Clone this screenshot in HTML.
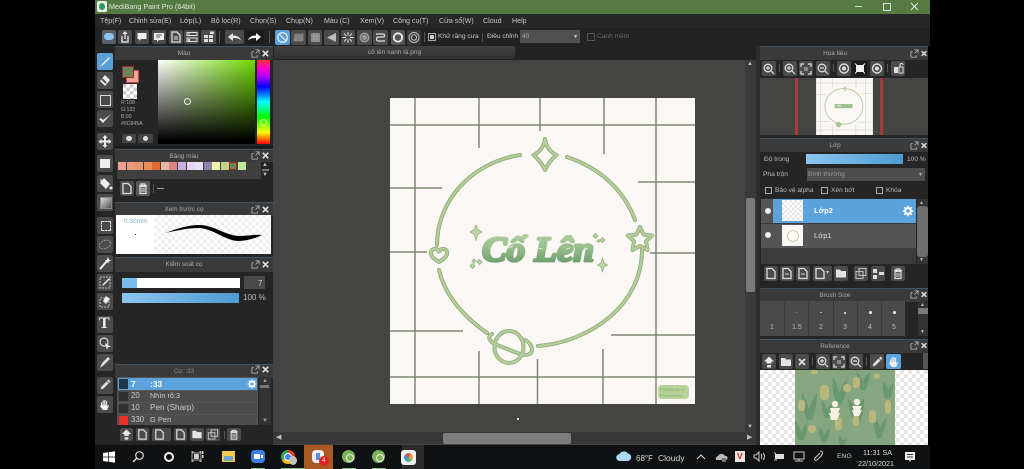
<!DOCTYPE html>
<html><head><meta charset="utf-8"><style>
html,body{margin:0;padding:0;width:1024px;height:469px;overflow:hidden;background:#000;font-family:"Liberation Sans","DejaVu Sans",sans-serif}
#r{position:relative;width:1024px;height:469px;overflow:hidden;background:#000;filter:blur(.35px)}
#r div,#r span,#r svg{position:absolute}
.m{top:16px;font-size:7.1px;color:#c8c8c8;white-space:nowrap;line-height:10px}
.h{background:#3a3a3a;border-top:1px solid #44535e;color:#aaa;font-size:6.400px;text-align:center;line-height:13px}
.hl{width:138px;padding-right:20px}
.hr{width:150px;padding-right:18px}
.t{font-size:6.600px;color:#bbb;white-space:nowrap;line-height:10px}
.b{background:#4b4b4b;border-radius:2px}
.w{background:#fff}
.s{width:7.500px;height:8px;top:162px}
</style></head><body><div id="r">
<svg width="0" height="0" style="left:0;top:0"><defs>
<symbol id="page" viewBox="0 0 14 14"><path d="M3 2h5l3 3v7H3z" fill="none" stroke="#ddd" stroke-width="1.3"/></symbol>
<symbol id="trash" viewBox="0 0 14 14"><path d="M3 4h8M5 4V2.500h4V4M4 5h6v7H4z" fill="none" stroke="#ddd" stroke-width="1.200"/><path d="M6 6.500v4M8 6.500v4" stroke="#ddd"/></symbol>
<symbol id="folder" viewBox="0 0 14 14"><path d="M2 3h4l1 1.500h5V11H2z" fill="#e4e4e4"/></symbol>
<symbol id="zin" viewBox="0 0 14 14"><circle cx="6" cy="6" r="3.800" fill="none" stroke="#ddd" stroke-width="1.300"/><path d="M9 9l3 3M4 6h4M6 4v4" stroke="#ddd" stroke-width="1.200"/></symbol>
<symbol id="zout" viewBox="0 0 14 14"><circle cx="6" cy="6" r="3.800" fill="none" stroke="#ddd" stroke-width="1.300"/><path d="M9 9l3 3M4 6h4" stroke="#ddd" stroke-width="1.200"/></symbol>
<symbol id="fit" viewBox="0 0 14 14"><path d="M2 5V2h3M9 2h3v3M12 9v3H9M5 12H2V9" fill="none" stroke="#ddd" stroke-width="1.200"/><rect x="5" y="5" width="4" height="4" fill="#888"/></symbol>
<symbol id="up" viewBox="0 0 14 14"><path d="M7 1.500l5 5H9.500v2h-5v-2H2zM5 10h4v2.500H5z" fill="#e8e8e8"/></symbol>
<symbol id="copy" viewBox="0 0 14 14"><path d="M5 2h7v7H5zM2 5h7v7H2z" fill="none" stroke="#bbb" stroke-width="1.100"/></symbol>
<symbol id="dropper" viewBox="0 0 14 14"><path d="M2.500 11.500l1-3 5-5 2 2-5 5zM9 3l1.500-1.500 2 2L11 5z" fill="#ddd"/></symbol>
<symbol id="hand" viewBox="0 0 14 14"><path d="M3 7V4.500h1V7h.5V2.500h1.200V7h.5V2h1.200v5h.5V3h1.200v5.500l1-1.500 1 .5-2 4.500H5L2 8.500z" fill="#eee"/></symbol>
<symbol id="gear" viewBox="0 0 14 14"><circle cx="7" cy="7" r="3.400" fill="none" stroke="#fff" stroke-width="2.400"/><path d="M7 .8v2.500M7 10.700v2.500M.8 7h2.500M10.700 7h2.500M2.600 2.600l1.800 1.800M9.600 9.600l1.800 1.800M2.600 11.400l1.800-1.800M9.600 4.400l1.800-1.800" stroke="#fff" stroke-width="1.800"/></symbol>
<symbol id="pop" viewBox="0 0 10 10"><path d="M1 3h2M1 3v6h6V7M5 1h4v4M9 1L5 5" fill="none" stroke="#bbb" stroke-width=".9"/></symbol>
<symbol id="x" viewBox="0 0 10 10"><path d="M2 2l6 6M8 2L2 8" stroke="#ddd" stroke-width="1.900"/></symbol>
<linearGradient id="tg" gradientUnits="userSpaceOnUse" x1="0" y1="232" x2="0" y2="264"><stop offset="0" stop-color="#b4d2a2"/><stop offset=".5" stop-color="#97bd8c"/><stop offset="1" stop-color="#6a9c6e"/></linearGradient>
</defs></svg>

<!-- app chrome -->
<div style="left:95px;top:0;width:835px;height:14px;background:#557a42"></div>
<div style="left:97px;top:1px;width:10px;height:11px;border-radius:2px;background:#e8f2e8"></div>
<div style="left:99px;top:3px;width:6px;height:7px;border-radius:50%;background:#2b9a66"></div>
<span style="left:109px;top:2px;font-size:7.200px;line-height:10px;color:#dfe6d8;white-space:nowrap">MediBang Paint Pro (64bit)</span>
<div style="left:855px;top:6px;width:7px;height:1px;background:#ddd"></div>
<div style="left:883px;top:3px;width:6px;height:6px;border:1px solid #ddd"></div>
<svg style="left:910px;top:2px" width="9" height="9"><path d="M1 1l7 7M8 1L1 8" stroke="#e8e8e8"/></svg>

<div style="left:95px;top:14px;width:835px;height:14px;background:#272727"></div>
<span class="m" style="left:100px">Tệp(F)</span><span class="m" style="left:129px">Chỉnh sửa(E)</span><span class="m" style="left:180px">Lớp(L)</span><span class="m" style="left:211px">Bộ lọc(R)</span><span class="m" style="left:250px">Chọn(S)</span><span class="m" style="left:286px">Chụp(N)</span><span class="m" style="left:324px">Màu (C)</span><span class="m" style="left:360px">Xem(V)</span><span class="m" style="left:393px">Công cụ(T)</span><span class="m" style="left:439px">Cửa sổ(W)</span><span class="m" style="left:483px">Cloud</span><span class="m" style="left:512px">Help</span>

<div style="left:95px;top:28px;width:835px;height:18px;background:#222"></div>
<div class="b" style="left:102px;top:30px;width:14px;height:14px;background:#55606a"></div><div style="left:104px;top:33px;width:10px;height:7px;border-radius:4px;background:#8fc4ee"></div>
<div class="b" style="left:118px;top:30px;width:14px;height:14px"></div><svg style="left:118px;top:30px" width="14" height="14"><path d="M4 6v6h6V6M7 9V2M5 4l2-2 2 2" fill="none" stroke="#eee" stroke-width="1.200"/></svg>
<div class="b" style="left:135px;top:30px;width:14px;height:14px"></div><svg style="left:135px;top:30px" width="14" height="14"><path d="M2.500 3h9v6H6l-2 2V9H2.500z" fill="#eee"/></svg>
<div class="b" style="left:152px;top:30px;width:14px;height:14px"></div><svg style="left:152px;top:30px" width="14" height="14"><path d="M2 3h10v7H7l-2 2v-2H2z" fill="#eee"/><path d="M4 5h6M4 7h4" stroke="#555"/></svg>
<div class="b" style="left:169px;top:30px;width:14px;height:14px"></div><svg style="left:169px;top:30px" width="14" height="14"><use href="#page"/><path d="M5 7h4M5 9h4" stroke="#ddd"/></svg>
<div class="b" style="left:184px;top:30px;width:15px;height:14px"></div><svg style="left:185px;top:30px" width="14" height="14"><path d="M2 2.500h10v3H2zM2 8h10v3.500H2z" fill="none" stroke="#ddd"/><rect x="3" y="3.500" width="2" height="1" fill="#ddd"/><rect x="3" y="9" width="2" height="2" fill="#ddd"/></svg>
<div class="b" style="left:201px;top:30px;width:15px;height:14px"></div><svg style="left:202px;top:30px" width="14" height="14"><path d="M2 5h4v3H2zM7 5h4v3H7zM2 9h4v3H2zM7 9h4v3H7zM8 1.500h4v2.500H8z" fill="#ddd"/></svg>
<div style="left:219px;top:31px;width:1px;height:12px;background:#555"></div>
<div class="b" style="left:225px;top:30px;width:19px;height:14px"></div><svg style="left:225px;top:30px" width="19" height="14"><path d="M3 7l5-4v2.500c4 0 7 1.500 8 5-2-2-4-2.500-8-2.500V11z" fill="#e4e4e4"/></svg>
<div class="b" style="left:246px;top:30px;width:18px;height:14px;background:#1c1c1c"></div><svg style="left:246px;top:30px" width="18" height="14"><path d="M15 7l-5-4v2.500c-4 0-7 1.500-8 5 2-2 4-2.500 8-2.500V11z" fill="#fff"/></svg>
<div style="left:269px;top:31px;width:1px;height:12px;background:#555"></div>
<div style="left:275px;top:30px;width:15px;height:15px;background:#5a9fd8;border-radius:2px"></div><svg style="left:275px;top:30px" width="15" height="15"><circle cx="7.500" cy="7.500" r="4.800" fill="none" stroke="#e9f3fb" stroke-width="1.200"/><path d="M4 4l7 7" stroke="#e9f3fb" stroke-width="1.200"/></svg>
<div class="b" style="left:291px;top:30px;width:15px;height:15px"></div><svg style="left:291px;top:30px" width="15" height="15"><path d="M3 11l1-7h8v7zM3 8h9M4 6h8M3.500 10h8.500" fill="#777" stroke="#999" stroke-width=".6"/></svg>
<div class="b" style="left:308px;top:30px;width:14px;height:15px"></div><svg style="left:308px;top:30px" width="14" height="15"><rect x="3" y="3" width="9" height="9" fill="#888"/><path d="M6 3v9M9 3v9M3 6h9M3 9h9" stroke="#aaa" stroke-width=".6"/></svg>
<div class="b" style="left:324px;top:30px;width:15px;height:15px"></div><svg style="left:324px;top:30px" width="15" height="15"><path d="M12 3v9L3 7.500z" fill="#bbb"/></svg>
<div class="b" style="left:341px;top:30px;width:14px;height:15px"></div><svg style="left:341px;top:30px" width="14" height="15"><path d="M7 2v3.500M7 9.500V13M1.500 7.500H5M9 7.500h3.500M3 3.500l2.500 2.500M8.500 9l2.500 2.500M11 3.500L8.500 6M5.500 9L3 11.500" stroke="#ddd" stroke-width="1"/></svg>
<div class="b" style="left:357px;top:30px;width:15px;height:15px"></div><svg style="left:357px;top:30px" width="15" height="15"><circle cx="7.500" cy="7.500" r="5" fill="#999"/><circle cx="7.500" cy="7.500" r="3" fill="none" stroke="#666"/></svg>
<div class="b" style="left:373px;top:30px;width:15px;height:15px"></div><svg style="left:373px;top:30px" width="15" height="15"><path d="M3 4h7c2 0 2 3 0 3H5c-2 0-2 4 0 4h7" fill="none" stroke="#ddd" stroke-width="1.200"/></svg>
<div class="b" style="left:391px;top:30px;width:14px;height:15px;background:#555"></div><svg style="left:391px;top:30px" width="14" height="15"><circle cx="7" cy="7.500" r="4.200" fill="none" stroke="#eee" stroke-width="1.800"/></svg>
<div class="b" style="left:407px;top:30px;width:14px;height:15px;background:#3a3a3a"></div><svg style="left:407px;top:30px" width="14" height="15"><circle cx="7" cy="7.500" r="5" fill="none" stroke="#bbb"/><circle cx="7" cy="7.500" r="2.700" fill="none" stroke="#bbb"/></svg>
<div style="left:424px;top:32px;width:1px;height:10px;background:#555"></div>
<div style="left:428px;top:33px;width:6px;height:6px;border:1px solid #aaa"></div><div style="left:430px;top:35px;width:4px;height:4px;background:#ccc"></div>
<span class="t" style="left:438px;top:32px;color:#c8c8c8">Khử răng cưa</span>
<div style="left:482px;top:33px;width:1px;height:9px;background:#555"></div>
<span class="t" style="left:487px;top:32px;color:#c8c8c8">Điều chỉnh</span>
<div style="left:520px;top:30px;width:60px;height:13px;background:#505050"></div><span class="t" style="left:522px;top:32px;color:#aaa">40</span><span class="t" style="left:574px;top:32px;font-size:6px;color:#ccc">▾</span>
<div style="left:587px;top:33px;width:6px;height:6px;border:1px solid #555"></div>
<span class="t" style="left:597px;top:32px;color:#6c6c6c">Canh mềm</span>

<!-- left tool column -->
<div style="left:95px;top:46px;width:20px;height:399px;background:#262626"></div>
<div style="left:97px;top:53px;width:16px;height:17px;background:#5a9fd8;border-radius:2px"></div><svg style="left:97px;top:53px" width="16" height="17"><path d="M3 14l2-3 7-7 1 1-7 7z" fill="#eaf3fb"/></svg>
<div class="b" style="left:97px;top:72px;width:16px;height:17px"></div><svg style="left:97px;top:72px" width="16" height="17"><path d="M8 3l5 5-5 6-5-5z" fill="#eee"/><path d="M5 7l4 4" stroke="#555" stroke-width="2"/></svg>
<div class="b" style="left:97px;top:91px;width:16px;height:17px"></div><div style="left:100px;top:95px;width:9px;height:9px;border:1px solid #ddd"></div>
<div class="b" style="left:97px;top:110px;width:16px;height:17px"></div><svg style="left:97px;top:110px" width="16" height="17"><path d="M2 9l4 4 8-9-8 6-2-2z" fill="#e4e4e4"/></svg>
<div class="b" style="left:97px;top:133px;width:16px;height:17px"></div><svg style="left:97px;top:133px" width="16" height="17"><path d="M8 2l2.500 3H9v2.500h2.500V6l3 2.500-3 2.500V9.500H9V12h1.500L8 15l-2.500-3H7V9.500H4.500V11l-3-2.500 3-2.500v1.500H7V5H5.500z" fill="#eee"/></svg>
<div class="b" style="left:97px;top:155px;width:16px;height:17px"></div><div style="left:100px;top:159px;width:10px;height:9px;background:#eee"></div>
<div class="b" style="left:97px;top:175px;width:16px;height:17px"></div><svg style="left:97px;top:175px" width="16" height="17"><path d="M7 3l6 6-4 5-6-6z" fill="#eee"/><path d="M4 8V4" stroke="#eee"/><circle cx="14" cy="13" r="1.500" fill="#eee"/></svg>
<div class="b" style="left:97px;top:194px;width:16px;height:17px"></div><div style="left:100px;top:197px;width:10px;height:10px;border:1px solid #888;background:linear-gradient(135deg,#ddd,#555)"></div>
<div class="b" style="left:97px;top:217px;width:16px;height:17px"></div><div style="left:101px;top:221px;width:8px;height:8px;border:1px dashed #ddd"></div>
<div class="b" style="left:97px;top:236px;width:16px;height:17px"></div><svg style="left:97px;top:236px" width="16" height="17"><ellipse cx="8" cy="8.500" rx="6" ry="4" transform="rotate(-25 8 8.500)" fill="none" stroke="#999" stroke-dasharray="2 1"/></svg>
<div class="b" style="left:97px;top:255px;width:16px;height:17px"></div><svg style="left:97px;top:255px" width="16" height="17"><path d="M3 14L10 6" stroke="#eee" stroke-width="2"/><path d="M11 2l1 2.500 2 1-2 1-1 2-1-2-2-1 2-1z" fill="#eee"/></svg>
<div class="b" style="left:97px;top:274px;width:16px;height:17px"></div><svg style="left:97px;top:274px" width="16" height="17"><rect x="3" y="3" width="10" height="11" fill="none" stroke="#bbb" stroke-dasharray="2 1"/><path d="M5 12l1-2 6-6 1 1-6 6z" fill="#eee"/></svg>
<div class="b" style="left:97px;top:293px;width:16px;height:17px"></div><svg style="left:97px;top:293px" width="16" height="17"><rect x="3" y="5" width="9" height="9" fill="none" stroke="#bbb" stroke-dasharray="2 1"/><path d="M9 3l4 3-4 5-3-3z" fill="#eee"/></svg>
<div class="b" style="left:97px;top:316px;width:16px;height:17px"></div><span style="left:99px;top:315px;font:bold 16px/18px 'Liberation Serif',serif;color:#eee">T</span>
<div class="b" style="left:97px;top:335px;width:16px;height:17px"></div><svg style="left:97px;top:335px" width="16" height="17"><circle cx="7" cy="7" r="4" fill="none" stroke="#ddd" stroke-width="1.200"/><path d="M8 8l6 4-3 0-1 3z" fill="#eee"/></svg>
<div class="b" style="left:97px;top:354px;width:16px;height:17px"></div><svg style="left:97px;top:354px" width="16" height="17"><path d="M3 14l2-5 6-6 2 2-6 6z" fill="#ddd"/></svg>
<div class="b" style="left:97px;top:377px;width:16px;height:17px"></div><svg style="left:98px;top:378px" width="14" height="14"><use href="#dropper"/></svg>
<div class="b" style="left:97px;top:396px;width:16px;height:17px"></div><svg style="left:98px;top:398px" width="14" height="14"><use href="#hand"/></svg>

<!-- left panels -->
<div style="left:115px;top:46px;width:158px;height:399px;background:#252525"></div>
<div class="h hl" style="left:115px;top:46px;height:13px">Màu</div>
<svg style="left:251px;top:49px" width="9" height="9"><use href="#pop"/></svg><svg style="left:261px;top:49px" width="9" height="9"><use href="#x"/></svg>
<div style="left:126px;top:70px;width:11px;height:11px;background:#f0a49a;border:1px solid #c44"></div>
<div style="left:122px;top:66px;width:10px;height:10px;background:#6c845a;border:1px solid #a02828"></div>
<div style="left:123px;top:84px;width:14px;height:15px;background:conic-gradient(#fff 25%,#ccc 0 50%,#fff 0 75%,#ccc 0);background-size:7px 7px"></div>
<span class="t" style="left:121px;top:100px;font-size:5.200px;line-height:7px;color:#aaa;white-space:pre">R:108
G:132
B:90
#6C845A</span>
<div class="b" style="left:122px;top:134px;width:14px;height:9px;background:#444"></div><div style="left:126px;top:136px;width:6px;height:5px;border-radius:3px;background:#ddd"></div>
<div class="b" style="left:138px;top:134px;width:15px;height:9px;background:#444"></div><div style="left:143px;top:136px;width:5px;height:5px;border-radius:3px;background:#ddd"></div>
<div style="left:158px;top:60px;width:97px;height:84px;background:linear-gradient(to bottom,rgba(0,0,0,0),#000 96%),linear-gradient(to right,#fff,#6dd800)"></div>
<div style="left:257px;top:60px;width:13px;height:84px;background:linear-gradient(to bottom,#f33,#f0c 10%,#a0f 20%,#00f 32%,#0ff 50%,#0f0 68%,#ff0 86%,#f00)"></div>
<div style="left:184px;top:98px;width:5px;height:5px;border:1.500px solid #eee;border-radius:50%"></div>
<div style="left:260px;top:119px;width:5px;height:5px;border:1.500px solid #d8f0a0;border-radius:50%"></div>
<div style="left:115px;top:146px;width:158px;height:2px;background:#1a1a1a"></div>

<div class="h hl" style="left:115px;top:149px;height:12px">Bảng màu</div>
<svg style="left:251px;top:151px" width="9" height="9"><use href="#pop"/></svg><svg style="left:261px;top:151px" width="9" height="9"><use href="#x"/></svg>
<div style="left:117px;top:161px;width:144px;height:18px;background:#3f3f3f"></div>
<div class="s" style="left:118px;background:#e9a08e"></div><div class="s" style="left:127px;background:#ea9a7c"></div><div class="s" style="left:135px;background:#e9956c"></div><div class="s" style="left:144px;background:#e98b58"></div><div class="s" style="left:152px;background:#dd6a30"></div><div class="s" style="left:161px;background:#e9b7a2"></div><div class="s" style="left:169px;background:#d98585"></div><div class="s" style="left:178px;background:#cdb0e0"></div><div class="s" style="left:187px;background:#e6d4f2"></div><div class="s" style="left:195px;background:#e8e0f5"></div><div class="s" style="left:204px;background:#8a82a8"></div><div class="s" style="left:212px;background:#f4f2a8"></div><div class="s" style="left:221px;background:#bcd68c"></div><div class="s" style="left:229px;background:#6c845a;box-sizing:border-box;border:1px solid #a02828"></div><div class="s" style="left:238px;background:#bfe798"></div>
<span style="left:262px;top:162px;font-size:6px;color:#bbb;line-height:7px">▲</span><div style="left:262px;top:169px;width:7px;height:2px;background:#777"></div><span style="left:262px;top:172px;font-size:6px;color:#bbb;line-height:7px">▼</span>
<div class="b" style="left:120px;top:181px;width:14px;height:15px"></div><svg style="left:120px;top:181px" width="14" height="15"><use href="#page"/></svg>
<div class="b" style="left:136px;top:181px;width:14px;height:15px;background:#5a5a5a"></div><svg style="left:136px;top:181px" width="14" height="15"><use href="#trash"/></svg>
<div style="left:153px;top:184px;width:1px;height:9px;background:#555"></div>
<div style="left:157px;top:188px;width:7px;height:1px;background:#aaa"></div>

<div class="h hl" style="left:115px;top:202px;height:13px">Xem trước cọ</div>
<svg style="left:251px;top:205px" width="9" height="9"><use href="#pop"/></svg><svg style="left:261px;top:205px" width="9" height="9"><use href="#x"/></svg>
<div style="left:116px;top:215px;width:38px;height:39px;background:#fff"></div>
<span style="left:124px;top:217px;font-size:6.500px;line-height:9px;color:#7fa9c9">0.30mm</span>
<div style="left:135px;top:234px;width:1px;height:1px;background:#333"></div>
<div style="left:154px;top:215px;width:117px;height:39px;background:#fff repeating-conic-gradient(#eee 0 25%,#fff 0 50%) 0 0/7px 7px"></div>
<svg style="left:154px;top:215px" width="117" height="39"><path d="M11 18C25 13 35 10 45 10C60 10 70 20 85 21C95 21 103 19 108 20C100 24 92 26 84 26C70 25 60 14 45 13C35 13 25 15 11 18Z" fill="#000"/></svg>

<div class="h hl" style="left:115px;top:257px;height:14px">Kiểm soát cọ</div>
<svg style="left:251px;top:260px" width="9" height="9"><use href="#pop"/></svg><svg style="left:261px;top:260px" width="9" height="9"><use href="#x"/></svg>
<div style="left:122px;top:278px;width:118px;height:10px;background:#fff"></div><div style="left:122px;top:278px;width:15px;height:10px;background:#79bdeb"></div>
<div style="left:244px;top:276px;width:21px;height:13px;background:#4a4a4a"></div><span class="t" style="left:258px;top:279px;color:#ccc;font-size:8px">7</span>
<div style="left:122px;top:293px;width:117px;height:10px;background:linear-gradient(to right,#8cc6f0,#4d9bd2)"></div>
<span class="t" style="left:243px;top:293px;font-size:8px;color:#bbb">100 %</span>

<div class="h hl" style="left:115px;top:364px;height:13px;color:#8c8c8c">Cọ: :33</div>
<svg style="left:251px;top:365px" width="9" height="9"><use href="#pop"/></svg><svg style="left:261px;top:365px" width="9" height="9"><use href="#x"/></svg>
<div style="left:117px;top:377px;width:141px;height:48px;background:#555"></div>
<div style="left:118px;top:378px;width:139px;height:12px;background:#5ba3dc"></div>
<div style="left:119px;top:379px;width:9px;height:10px;background:#1f3447"></div>
<span class="t" style="left:131px;top:379px;font-size:8.500px;color:#fff;font-weight:bold">7</span><span class="t" style="left:150px;top:379px;font-size:8.500px;color:#fff;font-weight:bold">:33</span>
<svg style="left:247px;top:379px" width="10" height="10"><use href="#gear"/></svg>
<div style="left:118px;top:391px;width:139px;height:11px;background:#4c4c4c"></div><div style="left:119px;top:392px;width:9px;height:9px;background:#2f2f2f"></div>
<span class="t" style="left:131px;top:391px;font-size:7.800px;color:#ccc">20</span><span class="t" style="left:150px;top:391px;font-size:7.300px;color:#ccc">Nhìn rõ:3</span>
<div style="left:118px;top:403px;width:139px;height:11px;background:#4c4c4c"></div><div style="left:119px;top:404px;width:9px;height:9px;background:#2f2f2f"></div>
<span class="t" style="left:131px;top:403px;font-size:7.800px;color:#ccc">10</span><span class="t" style="left:150px;top:403px;font-size:8.200px;color:#ccc">Pen (Sharp)</span>
<div style="left:118px;top:415px;width:139px;height:10px;background:#4c4c4c"></div><div style="left:119px;top:416px;width:9px;height:9px;background:#e83030"></div>
<span class="t" style="left:131px;top:415px;font-size:7.800px;color:#ccc">330</span><span class="t" style="left:150px;top:415px;font-size:7.500px;color:#ccc">G Pen</span>
<div style="left:259px;top:377px;width:12px;height:48px;background:#333"></div><span style="left:262px;top:378px;font-size:6px;color:#999;line-height:7px">▲</span><div style="left:260px;top:385px;width:9px;height:3px;background:#777"></div><span style="left:262px;top:418px;font-size:6px;color:#999;line-height:7px">▼</span>
<div class="b" style="left:120px;top:428px;width:13px;height:13px"></div><svg style="left:120px;top:428px" width="13" height="13"><use href="#up"/></svg>
<div class="b" style="left:136px;top:428px;width:13px;height:13px"></div><svg style="left:136px;top:428px" width="13" height="13"><use href="#page"/></svg>
<div class="b" style="left:152px;top:428px;width:19px;height:13px"></div><svg style="left:153px;top:428px" width="13" height="13"><use href="#page"/></svg>
<div class="b" style="left:174px;top:428px;width:13px;height:13px"></div><svg style="left:174px;top:428px" width="13" height="13"><use href="#page"/></svg>
<div class="b" style="left:190px;top:428px;width:14px;height:13px"></div><svg style="left:190px;top:428px" width="14" height="13"><use href="#folder"/></svg>
<div class="b" style="left:206px;top:428px;width:14px;height:13px"></div><svg style="left:206px;top:428px" width="14" height="13"><use href="#copy"/></svg>
<div style="left:224px;top:431px;width:1px;height:8px;background:#555"></div>
<div class="b" style="left:227px;top:428px;width:14px;height:13px"></div><svg style="left:227px;top:428px" width="14" height="13"><use href="#trash"/></svg>

<!-- canvas area -->
<div style="left:273px;top:46px;width:487px;height:399px;background:#444442"></div>
<div style="left:273px;top:46px;width:487px;height:14px;background:#222"></div>
<div style="left:274px;top:46px;width:241px;height:13px;background:linear-gradient(#414141,#303030);color:#aaa;font-size:6.600px;line-height:13px;text-align:center;white-space:nowrap">cố lên xanh lá.png</div>
<div style="left:745px;top:60px;width:11px;height:372px;background:#3a3a3a"></div>
<span style="left:747px;top:61px;font-size:6px;line-height:7px;color:#bbb">▲</span>
<span style="left:747px;top:424px;font-size:6px;line-height:7px;color:#bbb">▼</span>
<div style="left:746px;top:198px;width:9px;height:94px;background:#7a7a7a;border-radius:2px"></div>
<div style="left:273px;top:432px;width:483px;height:12px;background:#383838"></div>
<span style="left:276px;top:433px;font-size:7px;line-height:9px;color:#bbb">◀</span>
<span style="left:747px;top:433px;font-size:7px;line-height:9px;color:#bbb">▶</span>
<div style="left:443px;top:433px;width:128px;height:11px;background:#7e7e7e;border-radius:2px"></div>
<div style="left:517px;top:418px;width:2px;height:2px;background:#ddd"></div>

<!-- artwork -->
<svg style="left:390px;top:98px" width="305" height="306" viewBox="390 98 305 306">
<defs>
<g id="art" fill="none" stroke-linecap="round" stroke-linejoin="round">
<path d="M520 155C470 163 437 202 437 245"/>
<path d="M567 157C600 168 624 190 635 220"/>
<path d="M439 270C445 295 463 316 487 333"/>
<path d="M538 346C590 342 642 305 642 250"/>
<path d="M545 139q1.500 11 11.500 16-8 7-11.500 15-3.500-8-11.500-15 10-5 11.500-16z"/>
<path d="M640 227l3.500 7.500 8.500 1-6 6 1.500 8.500-7.500-4-7.500 4 1.500-8.500-6-6 8.500-1z"/>
<path d="M439 262c-7-4-9-8-8-10.500 1.500-3.500 6-3.500 8 0 2-3.500 6.500-3.500 8 0 1 2.500-1 6.500-8 10.500z"/>
<ellipse cx="509" cy="347" rx="14.500" ry="16"/>
<path d="M492 334C487 336 489 342 497 345L520 354C530 357 534 352 531 346C530 343 527 341 525 340"/>
</g>
</defs>
<rect x="390" y="98" width="305" height="306" fill="#fbf7f4"/>
<g stroke="#7d8574" stroke-width="1.500" fill="none">
<path d="M415 98v306M656 98v306M479 98v50M540 98v33M604 98v56M390 125h305M390 377h305M390 188h52M638 182h57M390 252h37M650 253h45M390 331h73M611 335h84M479 351v53M537.500 359v45M603 349v55"/>
</g>
<use href="#art" stroke="#8caa78" stroke-width="4"/>
<use href="#art" stroke="#b3cd9a" stroke-width="2.400"/>
<g stroke="#9cbb88" stroke-width="1" stroke-linejoin="round" fill="#bcd4a6">
<path d="M476 225l1.800 4.500 4.200 2.500-4.200 2.500-1.800 6-1.800-6-4.200-2.500 4.200-2.500z"/>
<path d="M602.500 258l1.500 5 3.500 2-3.500 2-1.500 5-1.500-5-3.500-2 3.500-2z"/>
<path d="M470 266l2.500-2.500 2.500 2.500-2.500 2.500zM477 262l2.500-2.500 2.500 2.500-2.500 2.500zM472 261l2-2 2 2-2 2z"/>
<path d="M593 236l2.500-2.500 2.500 2.500-2.500 2.500zM600 240l2.500-2.500 2.500 2.500-2.500 2.500zM597 241l1.500-1.500 1.500 1.500-1.500 1.500z"/>
</g>
<text x="482" y="261" font-family="Liberation Serif" font-weight="bold" font-style="italic" font-size="35" textLength="112" lengthAdjust="spacingAndGlyphs" fill="url(#tg)" stroke="url(#tg)" stroke-width="2.800" stroke-linejoin="round">Cố Lên</text>
<g stroke="#e8f2df" stroke-width="1" fill="none" opacity=".8"><path d="M490 248l5 1M508 248l5-2M537 248l6 1M551 248l4 1M566 249l4-1M584 248l4 1"/></g>
<rect x="658" y="385" width="31" height="14" rx="4" fill="#b7d397"/>
<text x="660" y="391" font-family="Liberation Sans" font-size="4.300" fill="#8fb07a">MediBang.vn</text>
<text x="660" y="397" font-family="Liberation Sans" font-size="4.300" fill="#8fb07a">Background</text>
</svg>

<!-- right panels -->
<div style="left:756px;top:46px;width:4px;height:399px;background:#2d2d2d"></div>
<div style="left:760px;top:46px;width:168px;height:399px;background:#252525"></div>
<div class="h hr" style="left:760px;top:46px;height:13px">Họa tiêu</div>
<svg style="left:910px;top:49px" width="9" height="9"><use href="#pop"/></svg><svg style="left:920px;top:49px" width="8" height="9"><use href="#x"/></svg>
<div class="b" style="left:762px;top:61px;width:14px;height:15px"></div><svg style="left:762px;top:62px" width="14" height="14"><use href="#zin"/></svg>
<div style="left:779px;top:64px;width:1px;height:8px;background:#555"></div>
<div class="b" style="left:783px;top:61px;width:14px;height:15px"></div><svg style="left:783px;top:62px" width="14" height="14"><use href="#zin"/></svg>
<div class="b" style="left:799px;top:61px;width:14px;height:15px"></div><svg style="left:799px;top:62px" width="14" height="14"><use href="#fit"/></svg>
<div class="b" style="left:816px;top:61px;width:14px;height:15px"></div><svg style="left:816px;top:62px" width="14" height="14"><use href="#zout"/></svg>
<div style="left:833px;top:64px;width:1px;height:8px;background:#555"></div>
<div class="b" style="left:837px;top:61px;width:14px;height:15px"></div><svg style="left:837px;top:61px" width="14" height="15"><circle cx="7" cy="7.500" r="4.500" fill="none" stroke="#ddd" stroke-width="1.400"/><circle cx="7" cy="7.500" r="2" fill="#ddd"/></svg>
<div class="b" style="left:853px;top:61px;width:14px;height:15px;background:#1c1c1c"></div><svg style="left:853px;top:61px" width="14" height="15"><path d="M3 4h8v7H3z" fill="#eee"/><path d="M2 2.500l2 2M12 2.500l-2 2M2 12.500l2-2M12 12.500l-2-2" stroke="#eee"/></svg>
<div class="b" style="left:870px;top:61px;width:14px;height:15px"></div><svg style="left:870px;top:61px" width="14" height="15"><circle cx="7" cy="7.500" r="4.500" fill="none" stroke="#ddd" stroke-width="1.400"/><circle cx="7" cy="7.500" r="2" fill="#ddd"/></svg>
<div style="left:887px;top:64px;width:1px;height:8px;background:#555"></div>
<div class="b" style="left:891px;top:61px;width:14px;height:15px"></div><svg style="left:891px;top:61px" width="14" height="15"><path d="M3 6h4v6H3z" fill="#ddd"/><path d="M8 6h4v6H8zM9 6V4c0-2 3-2 3 0" fill="none" stroke="#ddd"/></svg>
<div style="left:760px;top:78px;width:168px;height:57px;background:#444442"></div>
<div style="left:795px;top:78px;width:3px;height:57px;background:#a83a3a"></div>
<div style="left:880px;top:78px;width:3px;height:57px;background:#a83a3a"></div>
<svg style="left:816px;top:78px" width="57" height="57" viewBox="390 98 305 306"><rect x="390" y="98" width="305" height="306" fill="#fbf7f4"/><path d="M415 98v306M656 98v306M479 98v50M604 98v56M390 125h305M390 377h305M390 188h52M638 182h57M390 331h73M611 335h84M479 351v53M603 349v55" stroke="#d6d8ce" stroke-width="4" fill="none"/><ellipse cx="539" cy="250" rx="102" ry="96" fill="none" stroke="#b3c7a0" stroke-width="5"/><rect x="490" y="238" width="96" height="22" fill="#a0bf90"/><rect x="505" y="245" width="20" height="5" fill="#fbf7f4"/><circle cx="510" cy="348" r="15" fill="#a9c690"/><path d="M545 140l9 15-9 15-9-15z" fill="#bcd0aa"/></svg>

<div class="h hr" style="left:760px;top:138px;height:13px">Lớp</div>
<svg style="left:910px;top:141px" width="9" height="9"><use href="#pop"/></svg><svg style="left:920px;top:141px" width="8" height="9"><use href="#x"/></svg>
<span class="t" style="left:764px;top:155px;color:#bbb">Độ trong</span>
<div style="left:806px;top:154px;width:97px;height:10px;background:linear-gradient(to right,#8cc6f0,#4d9bd2)"></div>
<span class="t" style="left:907px;top:155px;color:#bbb">100 %</span>
<span class="t" style="left:763px;top:170px;color:#bbb">Pha trộn</span>
<div style="left:807px;top:168px;width:118px;height:13px;background:#4e4e4e"></div><span class="t" style="left:808px;top:170px;color:#999">Bình thường</span><span class="t" style="left:919px;top:170px;font-size:6px;color:#aaa">▾</span>
<div style="left:765px;top:187px;width:5px;height:5px;border:1px solid #aaa"></div><span class="t" style="left:775px;top:186px;color:#bbb">Bảo vệ alpha</span>
<div style="left:821px;top:187px;width:5px;height:5px;border:1px solid #aaa"></div><span class="t" style="left:831px;top:186px;color:#bbb">Xén bớt</span>
<div style="left:876px;top:187px;width:5px;height:5px;border:1px solid #aaa"></div><span class="t" style="left:886px;top:186px;color:#bbb">Khóa</span>
<div style="left:761px;top:199px;width:155px;height:65px;background:#3b3b3b"></div>
<div style="left:761px;top:199px;width:12px;height:24px;background:#555"></div>
<div style="left:773px;top:199px;width:143px;height:24px;background:#5ba3dc"></div>
<div style="left:765px;top:208px;width:6px;height:6px;background:#eee;border-radius:50%"></div>
<div style="left:782px;top:200px;width:21px;height:21px;background:#fff repeating-conic-gradient(#e4e4e4 0 25%,#fff 0 50%) 0 0/5px 5px"></div>
<span class="t" style="left:814px;top:206px;font-size:7.600px;color:#fff;font-weight:bold">Lớp2</span>
<svg style="left:902px;top:205px" width="12" height="12"><use href="#gear"/></svg>
<div style="left:761px;top:224px;width:155px;height:24px;background:#555"></div>
<div style="left:765px;top:232px;width:6px;height:6px;background:#eee;border-radius:50%"></div>
<div style="left:782px;top:225px;width:21px;height:21px;background:#fbf7f4"></div>
<div style="left:787px;top:230px;width:10px;height:10px;border:1px solid #c3d3ae;border-radius:50%"></div>
<span class="t" style="left:814px;top:231px;font-size:7.600px;color:#ddd">Lớp1</span>
<div style="left:917px;top:199px;width:11px;height:65px;background:#333"></div>
<span style="left:919px;top:200px;font-size:5px;line-height:6px;color:#bbb">▲</span><span style="left:919px;top:257px;font-size:5px;line-height:6px;color:#bbb">▼</span>
<div style="left:917px;top:206px;width:11px;height:51px;background:#6e6e6e;border-radius:3px"></div>
<div class="b" style="left:764px;top:266px;width:14px;height:15px"></div><svg style="left:764px;top:266px" width="14" height="15"><use href="#page"/></svg>
<div class="b" style="left:780px;top:266px;width:14px;height:15px"></div><svg style="left:780px;top:266px" width="14" height="15"><use href="#page"/><path d="M5 8h4" stroke="#ddd"/></svg>
<div class="b" style="left:796px;top:266px;width:14px;height:15px"></div><svg style="left:796px;top:266px" width="14" height="15"><use href="#page"/><path d="M5 8h4" stroke="#ddd"/></svg>
<div class="b" style="left:813px;top:266px;width:19px;height:15px"></div><svg style="left:813px;top:266px" width="14" height="15"><use href="#page"/></svg><span style="left:826px;top:270px;font-size:6px;line-height:7px;color:#ccc">▾</span>
<div class="b" style="left:834px;top:266px;width:14px;height:15px"></div><svg style="left:834px;top:266px" width="14" height="15"><use href="#folder"/></svg>
<div class="b" style="left:854px;top:266px;width:14px;height:15px"></div><svg style="left:854px;top:266px" width="14" height="15"><use href="#copy"/></svg>
<div class="b" style="left:871px;top:266px;width:14px;height:15px"></div><svg style="left:871px;top:266px" width="14" height="15"><path d="M2 3h4v4H2zM2 9h4v4H2zM8 6h5v3H8z" fill="#ddd"/></svg>
<div class="b" style="left:891px;top:266px;width:14px;height:15px"></div><svg style="left:891px;top:266px" width="14" height="15"><use href="#trash"/></svg>

<div class="h hr" style="left:760px;top:288px;height:13px">Brush Size</div>
<svg style="left:910px;top:290px" width="9" height="9"><use href="#pop"/></svg><svg style="left:920px;top:290px" width="8" height="9"><use href="#x"/></svg>
<div style="left:760px;top:301px;width:145px;height:35px;background:#4a4a4a"></div>
<div style="left:784px;top:301px;width:1px;height:35px;background:#3c3c3c"></div><div style="left:808px;top:301px;width:1px;height:35px;background:#3c3c3c"></div><div style="left:833px;top:301px;width:1px;height:35px;background:#3c3c3c"></div><div style="left:857px;top:301px;width:1px;height:35px;background:#3c3c3c"></div><div style="left:881px;top:301px;width:1px;height:35px;background:#3c3c3c"></div>
<div style="left:796px;top:312px;width:1px;height:1px;background:#888"></div><div style="left:820px;top:312px;width:2px;height:1px;background:#aaa"></div><div style="left:844px;top:312px;width:2px;height:2px;background:#ccc"></div><div style="left:869px;top:311px;width:3px;height:3px;background:#eee;border-radius:50%"></div><div style="left:893px;top:311px;width:3px;height:3px;background:#eee;border-radius:50%"></div>
<span class="t" style="left:770px;top:323px;font-size:7px">1</span><span class="t" style="left:792px;top:323px;font-size:7px">1.5</span><span class="t" style="left:819px;top:323px;font-size:7px">2</span><span class="t" style="left:843px;top:323px;font-size:7px">3</span><span class="t" style="left:868px;top:323px;font-size:7px">4</span><span class="t" style="left:892px;top:323px;font-size:7px">5</span>
<div style="left:918px;top:301px;width:10px;height:35px;background:#333"></div><div style="left:918px;top:308px;width:10px;height:6px;background:#7a7a7a"></div><span style="left:920px;top:302px;font-size:5px;line-height:6px;color:#bbb">▲</span><span style="left:920px;top:329px;font-size:5px;line-height:6px;color:#bbb">▼</span>

<div class="h hr" style="left:760px;top:339px;height:13px">Reference</div>
<svg style="left:910px;top:341px" width="9" height="9"><use href="#pop"/></svg><svg style="left:920px;top:341px" width="8" height="9"><use href="#x"/></svg>
<div class="b" style="left:762px;top:354px;width:14px;height:15px"></div><svg style="left:762px;top:355px" width="14" height="14"><use href="#up"/></svg>
<div class="b" style="left:779px;top:354px;width:14px;height:15px"></div><svg style="left:779px;top:355px" width="14" height="14"><use href="#folder"/></svg>
<div class="b" style="left:795px;top:354px;width:14px;height:15px"></div><svg style="left:797px;top:357px" width="10" height="10"><use href="#x"/></svg>
<div style="left:812px;top:357px;width:1px;height:9px;background:#555"></div>
<div class="b" style="left:816px;top:354px;width:14px;height:15px"></div><svg style="left:816px;top:355px" width="14" height="14"><use href="#zin"/></svg>
<div class="b" style="left:832px;top:354px;width:14px;height:15px"></div><svg style="left:832px;top:355px" width="14" height="14"><use href="#fit"/></svg>
<div class="b" style="left:849px;top:354px;width:14px;height:15px"></div><svg style="left:849px;top:355px" width="14" height="14"><use href="#zout"/></svg>
<div style="left:866px;top:357px;width:1px;height:9px;background:#555"></div>
<div class="b" style="left:870px;top:354px;width:14px;height:15px"></div><svg style="left:870px;top:355px" width="14" height="14"><use href="#dropper"/></svg>
<div style="left:886px;top:354px;width:15px;height:15px;background:#5ba3dc;border-radius:2px"></div><svg style="left:887px;top:355px" width="14" height="14"><use href="#hand"/></svg>
<div style="left:923px;top:353px;width:5px;height:16px;background:#555"></div>
<div style="left:760px;top:370px;width:168px;height:75px;background:#fff repeating-conic-gradient(#e6e6e6 0 25%,#fff 0 50%) 0 0/8px 8px"></div>
<svg style="left:795px;top:370px" width="100" height="75" viewBox="0 0 100 75">
<rect width="100" height="75" fill="#86a67f"/>
<g fill="#69976f">
<path d="M12 50q-6-15-5-28 6 10 7 18 2-10 8-17 0 15-5 27zM42 35q-6-15-4-28 5 8 6 17 3-10 8-14 0 14-6 25zM66 20q-5-9-4-18 5 5 6 10 2-6 7-10 0 10-5 18zM3 70q-3-10-3-20 5 6 6 12 2-5 6-9 0 10-4 17zM60 53q-7-13-7-25 6 6 8 14 2-8 8-14 1 14-5 25zM82 68q-4-11-3-22 4 5 6 12 2-6 6-10 0 10-5 20zM27 72q-4-8-3-15 4 3 5 8 3-5 6-7-1 8-4 14zM45 75q-2-5-1-10 3 2 4 6 2-3 4-4-1 4-3 8zM90 28q-3-8-2-16 4 3 5 8 2-4 5-6 0 8-3 14zM30 48q-4-9-3-18 4 4 5 10 3-6 6-8-1 9-4 16z"/>
</g>
<g fill="#bbb67e">
<rect x="25" y="15" width="9" height="15" rx="4"/><rect x="3" y="30" width="7" height="11" rx="3"/><rect x="74" y="40" width="7" height="13" rx="3"/><rect x="40" y="47" width="7" height="13" rx="3"/><rect x="90" y="30" width="6" height="14" rx="3"/><rect x="58" y="7" width="7" height="11" rx="3"/><rect x="16" y="0" width="7" height="4" rx="2"/><circle cx="52" cy="18" r="4"/><circle cx="17" cy="59" r="4"/><circle cx="82" cy="6" r="3"/><rect x="58" y="45" width="6" height="11" rx="3"/>
</g>
<g fill="#f4f0e2">
<circle cx="40" cy="34" r="3.200"/><path d="M35 38h10l-2 5h2l-3 7h-6l-2-7h2z"/>
<circle cx="62" cy="32" r="3.200"/><path d="M57 36h10l-2 4h2l-3 6h-5l-2-6h2z"/>
</g>
</svg>

<!-- taskbar -->
<div style="left:95px;top:445px;width:835px;height:24px;background:#0f1112"></div>
<svg style="left:103px;top:451px" width="12" height="12"><path d="M0 2l5-.7V5.600H0zM5.800 1.200L12 .3v5.300H5.800zM0 6.400h5v4.300L0 10zM5.800 6.400H12v5.300l-6.200-.9z" fill="#fff"/></svg>
<svg style="left:131px;top:450px" width="14" height="14"><circle cx="8.500" cy="5.500" r="3.800" fill="none" stroke="#ddd" stroke-width="1.200"/><path d="M5.800 8.200L2 12" stroke="#ddd" stroke-width="1.400"/></svg>
<div style="left:164px;top:452px;width:6px;height:6px;border:2px solid #eee;border-radius:50%"></div>
<svg style="left:191px;top:451px" width="13" height="11"><path d="M1 0h1v2h7V0h1v11H9V9H2v2H1z" fill="none" stroke="#aaa"/><path d="M3 3h5v5H3zM11 0h1.500v3H11zM11 4h1.500v3H11z" fill="#ccc"/></svg>
<div style="left:222px;top:451px;width:13px;height:11px;background:#f1c94c"></div><div style="left:224px;top:456px;width:9px;height:5px;background:#6fa7c2"></div>
<div style="left:251px;top:450px;width:14px;height:13px;background:#3d7fe0;border-radius:4px"></div><div style="left:254px;top:454px;width:6px;height:5px;background:#fff;border-radius:1px"></div><div style="left:261px;top:455px;width:2px;height:3px;background:#fff"></div>
<div style="left:281px;top:450px;width:14px;height:14px;border-radius:50%;background:conic-gradient(#e94235 0 33%,#fbbc05 0 66%,#34a853 0)"></div><div style="left:285px;top:454px;width:6px;height:6px;border-radius:50%;background:#4285f4;outline:1px solid #fff"></div>
<div style="left:289px;top:456px;width:8px;height:9px;border-radius:50%;background:#c9c2b8"></div>
<div style="left:304px;top:445px;width:29px;height:24px;background:#a85a22"></div>
<div style="left:312px;top:450px;width:12px;height:13px;border-radius:4px;background:#f0f2f8"></div><div style="left:316px;top:453px;width:4px;height:7px;background:#5a8ed8"></div>
<div style="left:319px;top:456px;width:10px;height:10px;border-radius:50%;background:#e02020"></div><span style="left:322px;top:457px;font-size:6px;line-height:8px;color:#fff">4</span>
<div style="left:342px;top:450px;width:13px;height:13px;border-radius:50%;background:#7fb35a"></div><div style="left:346px;top:454px;width:6px;height:6px;border-radius:50%;border:1px solid #e8f3e0"></div>
<div style="left:372px;top:450px;width:13px;height:13px;border-radius:50%;background:#7fb35a"></div><div style="left:376px;top:454px;width:6px;height:6px;border-radius:50%;border:1px solid #e8f3e0"></div>
<div style="left:402px;top:445px;width:22px;height:24px;background:#2a2a2a"></div>
<div style="left:401px;top:450px;width:15px;height:15px;border-radius:3px;background:#eee"></div><div style="left:404px;top:453px;width:9px;height:9px;border-radius:50%;background:conic-gradient(#e84b3c,#f4b23e,#3cb878,#3c8ee8,#e84b3c)"></div>
<div style="left:251px;top:468px;width:14px;height:1px;background:#7fbf7f"></div><div style="left:281px;top:468px;width:24px;height:1px;background:#7fbf7f"></div><div style="left:342px;top:468px;width:14px;height:1px;background:#7fbf7f"></div><div style="left:372px;top:468px;width:14px;height:1px;background:#7fbf7f"></div>

<svg style="left:616px;top:450px" width="16" height="12"><path d="M4 11a3.500 3.500 0 0 1-.5-7A5 5 0 0 1 12 3.500 3.800 3.800 0 0 1 12 11z" fill="#a8d8f5"/></svg>
<span style="left:636px;top:453px;font-size:8px;line-height:11px;color:#ddd;white-space:nowrap">68°F</span>
<span style="left:658px;top:453px;font-size:8.500px;line-height:11px;color:#ddd;white-space:nowrap">Cloudy</span>
<svg style="left:696px;top:453px" width="10" height="7"><path d="M1 6l4-4 4 4" fill="none" stroke="#ddd"/></svg>
<svg style="left:715px;top:452px" width="13" height="10"><path d="M1 8a3 3 0 0 1 2-4 4 4 0 0 1 7 0 2 2 0 0 1 1 4z" fill="#bbb"/><rect x="7" y="6" width="4" height="4" fill="#777"/></svg>
<div style="left:735px;top:451px;width:10px;height:11px;background:#e8e2e0"></div><span style="left:737px;top:451px;font:bold 8.500px/11px 'Liberation Sans',sans-serif;color:#c2282e">V</span>
<svg style="left:753px;top:451px" width="12" height="11"><path d="M1 4h2l3-3v9L3 7H1z" fill="none" stroke="#ccc"/><path d="M8 3c1 1 1 4 0 5M10 2c2 2 2 5 0 7" fill="none" stroke="#ccc"/></svg>
<svg style="left:773px;top:451px" width="12" height="11"><path d="M2 3h9v5H2z" fill="#ddd"/><path d="M1 1.500l2 1.500M1 9h3" stroke="#ccc"/></svg>
<svg style="left:793px;top:451px" width="12" height="11"><path d="M1 1h10v7H1z" fill="none" stroke="#ccc"/><path d="M2 10h8M6 8v2" stroke="#ccc"/></svg>
<svg style="left:813px;top:450px" width="11" height="13"><path d="M7 1c3 0 3 3 1 5L4 10c-2 1-3-1-2-2l5-5" fill="none" stroke="#ccc"/></svg>
<span style="left:837px;top:452px;font-size:6.800px;line-height:10px;color:#ccc">ENG</span>
<span style="left:863px;top:448px;font-size:7.200px;line-height:10px;color:#ddd;white-space:nowrap">11:31 SA</span>
<span style="left:858px;top:459px;font-size:7.200px;line-height:10px;color:#ddd;white-space:nowrap">22/10/2021</span>
<svg style="left:904px;top:451px" width="12" height="12"><path d="M1 1h10v8H7l-1 2-1-2H1z" fill="#eee"/><path d="M3 3.500h6M3 6h6" stroke="#333"/></svg>
</div></body></html>
